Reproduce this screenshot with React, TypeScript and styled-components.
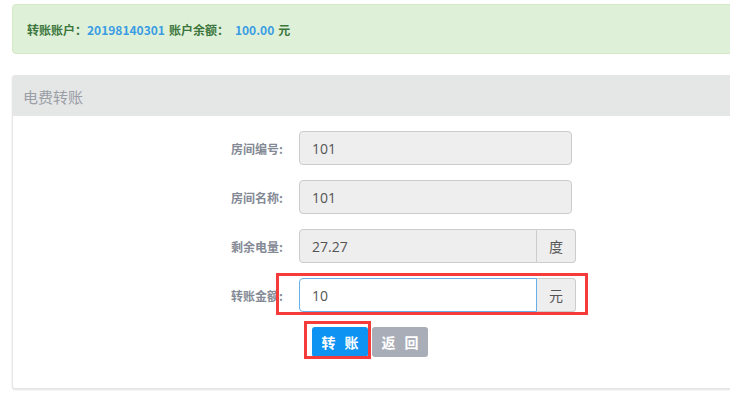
import React, { useEffect, useRef } from "react";
import styled, { createGlobalStyle } from "styled-components";

const GlobalStyle = createGlobalStyle`
  html, body {
    margin: 0;
    padding: 0;
    background: #fff;
    overflow: hidden;
  }
  body {
    font-family: "Open Sans", "Noto Sans CJK SC", sans-serif;
    color: #555;
  }
`;

const Page = styled.div`
  width: 780px;
  padding: 4px 12px;
  box-sizing: border-box;
  display: flex;
  flex-direction: column;
  gap: 21px;
`;

const Alert = styled.div`
  height: 50px;
  box-sizing: border-box;
  padding: 0 14px;
  display: flex;
  align-items: center;
  background: #dff0d8;
  border: 1px solid #d6e9c6;
  border-radius: 4px;
  font-size: 12px;
  font-weight: bold;
  color: #3c763d;
  font-family: "Noto Sans CJK SC", sans-serif;
  white-space: pre;
`;

const Em = styled.span<{ $gap?: number }>`
  color: #3a9de4;
  margin-left: ${(p) => p.$gap ?? 0}px;
  margin-right: 4px;
`;

const Panel = styled.section`
  border: 1px solid #e6e6e6;
  border-radius: 3px;
  box-shadow: 0 1px 2px rgba(0, 0, 0, 0.12);
  background: #fff;
`;

const PanelHeader = styled.div`
  height: 40px;
  padding: 0 10px;
  display: flex;
  align-items: center;
  background: #e5e6e6;
  color: #9a9ea6;
  font-size: 15px;
  font-family: "Noto Sans CJK SC", sans-serif;
`;

const PanelBody = styled.div`
  padding: 15px 0 31px;
  display: grid;
  grid-template-columns: 270px 277px;
  column-gap: 16px;
  row-gap: 15px;
  align-items: center;
`;

const Label = styled.label`
  text-align: right;
  font-size: 12px;
  font-weight: bold;
  color: #848a95;
  font-family: "Noto Sans CJK SC", sans-serif;
`;

const Field = styled.div<{ $narrow?: boolean }>`
  position: relative;
  display: flex;
  height: 34px;
  width: ${(p) => (p.$narrow ? "273px" : "277px")};
`;

const Input = styled.input<{ $active?: boolean; $grouped?: boolean }>`
  flex: 1;
  min-width: 0;
  height: 34px;
  box-sizing: border-box;
  padding: 0 12px;
  font-family: "Open Sans", sans-serif;
  font-size: 14px;
  color: #555;
  background: ${(p) => (p.$active ? "#fff" : "#eeeeee")};
  border: 1px solid ${(p) => (p.$active ? "#66afe9" : "#cccccc")};
  border-radius: ${(p) => (p.$grouped ? "4px 0 0 4px" : "4px")};
  outline: none;
  caret-color: #333;
`;

const Addon = styled.span`
  width: 39px;
  box-sizing: border-box;
  display: flex;
  align-items: center;
  justify-content: center;
  background: #eeeeee;
  border: 1px solid #cccccc;
  border-left: none;
  border-radius: 0 4px 4px 0;
  font-size: 14px;
  color: #555;
  font-family: "Noto Sans CJK SC", sans-serif;
`;

const Mark = styled.span<{ $l: number; $t: number; $w: number; $h: number }>`
  position: absolute;
  left: ${(p) => p.$l}px;
  top: ${(p) => p.$t}px;
  width: ${(p) => p.$w}px;
  height: ${(p) => p.$h}px;
  box-sizing: border-box;
  border: 3px solid #f63b3b;
  pointer-events: none;
`;

const Actions = styled.div`
  grid-column: 2;
  display: flex;
  gap: 4px;
  padding-left: 13px;
`;

const BtnWrap = styled.span`
  position: relative;
  display: inline-flex;
`;

const Button = styled.button<{ $primary?: boolean }>`
  width: 56px;
  height: 30px;
  border: none;
  border-radius: 3px;
  background: ${(p) => (p.$primary ? "#0e93f2" : "#a9adb8")};
  color: #fff;
  font-size: 14px;
  font-weight: bold;
  letter-spacing: 3px;
  padding: 0 0 0 3px;
  font-family: "Noto Sans CJK SC", sans-serif;
  cursor: pointer;
`;

export default function App() {
  const amountRef = useRef<HTMLInputElement>(null);

  useEffect(() => {
    const el = amountRef.current;
    if (el) {
      el.focus();
      el.setSelectionRange(el.value.length, el.value.length);
    }
  }, []);

  return (
    <>
      <GlobalStyle />
      <Page>
        <Alert>
          转账账户：<Em>20198140301</Em>账户余额：<Em $gap={6}>100.00</Em>元
        </Alert>
        <Panel>
          <PanelHeader>电费转账</PanelHeader>
          <PanelBody>
            <Label>房间编号:</Label>
            <Field $narrow>
              <Input readOnly value="101" />
            </Field>

            <Label>房间名称:</Label>
            <Field $narrow>
              <Input readOnly value="101" />
            </Field>

            <Label>剩余电量:</Label>
            <Field>
              <Input readOnly $grouped value="27.27" />
              <Addon>度</Addon>
            </Field>

            <Label>转账金额:</Label>
            <Field>
              <Input ref={amountRef} $active $grouped defaultValue="10" />
              <Addon>元</Addon>
              <Mark $l={-23} $t={-5} $w={312} $h={42} />
            </Field>

            <Actions>
              <BtnWrap>
                <Button $primary>转 账</Button>
                <Mark $l={-8} $t={-6} $w={67} $h={38} />
              </BtnWrap>
              <Button>返 回</Button>
            </Actions>
          </PanelBody>
        </Panel>
      </Page>
    </>
  );
}
